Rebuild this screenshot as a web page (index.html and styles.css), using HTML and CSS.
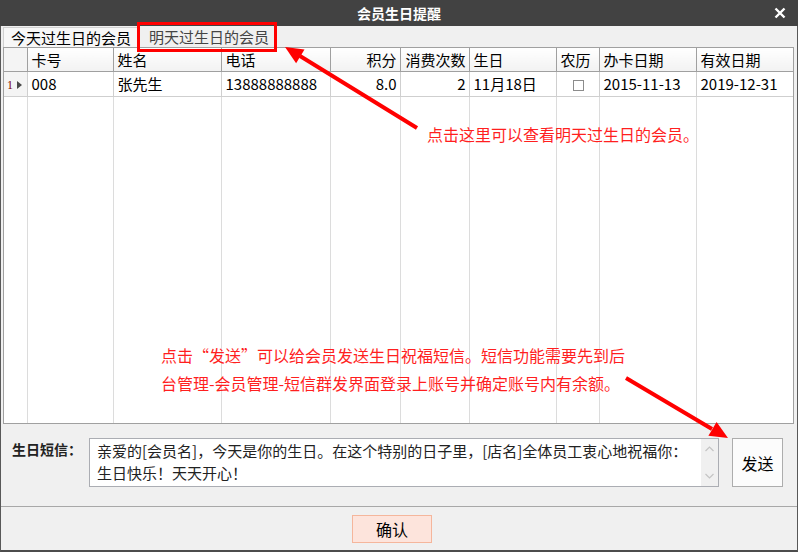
FILE: index.html
```html
<!DOCTYPE html>
<html lang="zh-CN">
<head>
  <meta charset="UTF-8" />
  <title>会员生日提醒</title>
  <link rel="stylesheet" href="styles.css">
</head>
<body>
  <div class="window">
    <div class="titlebar">
      <span></span>
      <span class="title">会员生日提醒</span>
      <svg class="close" width="12" height="12" viewBox="0 0 12 12">
        <path d="M1.5 1.5 L10.5 10.5 M10.5 1.5 L1.5 10.5" stroke="#fff" stroke-width="2.4" />
      </svg>
    </div>

    <div class="main">
      <div class="tabs">
        <div class="tab active">今天过生日的会员</div>
        <div class="tab">明天过生日的会员</div>
      </div>

      <div class="grid">
        <table>
          <colgroup>
            <col style="width:23px"><col style="width:86px"><col style="width:108px">
            <col style="width:109px"><col style="width:70px"><col style="width:69px">
            <col style="width:87px"><col style="width:43px"><col style="width:97px"><col>
          </colgroup>
          <tr class="head">
            <th class="rh"></th>
            <th>卡号</th>
            <th>姓名</th>
            <th>电话</th>
            <th class="num">积分</th>
            <th class="num">消费次数</th>
            <th>生日</th>
            <th>农历</th>
            <th>办卡日期</th>
            <th>有效日期</th>
          </tr>
          <tr class="row">
            <td class="rh"><span class="rownum">1</span><span class="cursor"></span></td>
            <td>008</td>
            <td>张先生</td>
            <td>13888888888</td>
            <td class="num">8.0</td>
            <td class="num">2</td>
            <td>11月18日</td>
            <td class="center"><span class="check"></span></td>
            <td>2015-11-13</td>
            <td>2019-12-31</td>
          </tr>
          <tr class="filler">
            <td></td><td></td><td></td><td></td><td></td>
            <td></td><td></td><td></td><td></td><td></td>
          </tr>
        </table>
      </div>

      <div class="sms">
        <div class="sms-label">生日短信：</div>
        <div class="sms-box">
          <div class="sms-text">
            <div>亲爱的[会员名]，今天是你的生日。在这个特别的日子里，[店名]全体员工衷心地祝福你：</div>
            <div>生日快乐！天天开心！</div>
          </div>
          <div class="scroll">
            <svg width="17" height="47" viewBox="0 0 17 47">
              <path d="M4.5 12 L8.5 8 L12.5 12" fill="none" stroke="#c4c4c4" stroke-width="1.2" />
              <path d="M4.5 35 L8.5 39 L12.5 35" fill="none" stroke="#c4c4c4" stroke-width="1.2" />
            </svg>
          </div>
        </div>
        <button class="send">发送</button>
      </div>

      <div class="footer">
        <button class="ok">确认</button>
      </div>
    </div>

    <!-- 标注 -->
    <div class="redbox"></div>
    <div class="note note-tab">点击这里可以查看明天过生日的会员。</div>
    <div class="note note-send">点击“发送”可以给会员发送生日祝福短信。短信功能需要先到后<br>台管理-会员管理-短信群发界面登录上账号并确定账号内有余额。</div>
    <svg class="arrows" width="798" height="552" viewBox="0 0 798 552">
      <line x1="417" y1="128" x2="300" y2="56" stroke="#ff0000" stroke-width="4" />
      <polygon points="285,47 304.5,49.6 296.1,63.2" fill="#ff0000" />
      <line x1="626" y1="378" x2="712" y2="429" stroke="#ff0000" stroke-width="4" />
      <polygon points="728,438 708.4,435.8 716.6,422" fill="#ff0000" />
    </svg>
  </div>
</body>
</html>
```

FILE: styles.css
```css
html, body {
  margin: 0;
}
body {
  width: 798px;
  height: 552px;
  overflow: hidden;
  background: #f0f0f0;
  font-family: "Noto Sans CJK SC", sans-serif;
  color: #000;
}
.window {
  position: relative;
  height: 552px;
  display: flex;
  flex-direction: column;
}
.titlebar {
  height: 26px;
  flex: none;
  background: #424242;
  display: grid;
  grid-template-columns: 1fr auto 1fr;
  align-items: center;
}
.title {
  color: #fff;
  font-size: 14px;
  font-weight: bold;
  line-height: 26px;
}
.close {
  justify-self: end;
  margin-right: 12px;
}
.main {
  flex: 1;
  display: flex;
  flex-direction: column;
  border-left: 1px solid #585858;
  border-right: 1px solid #585858;
  border-bottom: 2px solid #4c4c4c;
}
.tabs {
  height: 21px;
  flex: none;
  display: flex;
  padding-left: 2px;
}
.tab {
  font-size: 15px;
  line-height: 20px;
  padding: 0 7px;
  margin-top: 1px;
  color: #444;
}
.tab.active {
  color: #000;
  background: #f7f7f7;
  border: 1px solid #d0d0d0;
  border-bottom: none;
}
.tab + .tab {
  margin-left: 3px;
}
.grid {
  height: 377px;
  flex: none;
  margin: 0 3px 0 2px;
  border: 1px solid #a0a0a0;
  box-sizing: border-box;
  background: #fff;
}
.grid table {
  width: 100%;
  height: 100%;
  table-layout: fixed;
  border-collapse: collapse;
  border-style: hidden;
  font-size: 15px;
}
.grid th, .grid td {
  padding: 0 3px 0 4px;
  text-align: left;
  font-weight: normal;
  white-space: nowrap;
  overflow: hidden;
  line-height: 22px;
}
.head th {
  height: 23px;
  background: linear-gradient(#ffffff, #f2f2f2);
  border: 1px solid #a0a0a0;
}
.head .rh {
  background: #f4f4f4;
}
.row td {
  height: 23px;
  border: 1px solid #cfcfcf;
}
.filler td {
  border-left: 1px solid #dcdcdc;
  border-right: 1px solid #dcdcdc;
}
.grid .num {
  text-align: right;
}
.grid .center {
  text-align: center;
}
.row .rh {
  background: #f4f4f4;
  padding: 0 0 0 3px;
}
.rownum {
  font-family: "Liberation Serif", serif;
  font-size: 12px;
  color: #800000;
  vertical-align: middle;
}
.cursor {
  display: inline-block;
  margin-left: 4px;
  border-left: 5px solid #4a4a4a;
  border-top: 4px solid transparent;
  border-bottom: 4px solid transparent;
  vertical-align: middle;
}
.check {
  display: inline-block;
  width: 9px;
  height: 9px;
  border: 1px solid #8c8c8c;
  vertical-align: middle;
}
.sms {
  height: 82px;
  flex: none;
  display: flex;
  align-items: flex-start;
  padding: 14px 0 0 11px;
  box-sizing: border-box;
}
.sms-label {
  width: 77px;
  font-size: 14px;
  font-weight: bold;
  line-height: 20px;
  margin-top: 1px;
  color: #222;
}
.sms-box {
  width: 630px;
  height: 49px;
  box-sizing: border-box;
  border: 1px solid #abadb3;
  background: #fff;
  display: flex;
}
.sms-text {
  flex: 1;
  padding: 1px 0 0 7px;
  font-size: 15px;
  line-height: 22px;
  color: #222;
  white-space: nowrap;
}
.scroll {
  width: 17px;
  background: #f0f0f0;
}
.send {
  margin-left: 13px;
  width: 51px;
  height: 49px;
  border: 1px solid #adadad;
  background: #fcfcfc;
  font-family: inherit;
  font-size: 16px;
  padding: 0;
}
.footer {
  flex: 1;
  border-top: 1px solid #a8a8a8;
  padding: 8px 0 0 351px;
}
.ok {
  width: 80px;
  height: 28px;
  border: 1px solid #f5b69c;
  background: #fde4dc;
  font-family: inherit;
  font-size: 16px;
  padding: 0;
}
.redbox {
  position: absolute;
  left: 137px;
  top: 22px;
  width: 140px;
  height: 30px;
  box-sizing: border-box;
  border: 3px solid #ff0000;
}
.note {
  position: absolute;
  color: #ff1f1f;
  font-size: 16px;
  white-space: nowrap;
}
.note-tab {
  left: 427px;
  top: 125px;
  line-height: 18px;
}
.note-send {
  left: 161px;
  top: 341px;
  line-height: 28px;
}
.arrows {
  position: absolute;
  left: 0;
  top: 0;
  pointer-events: none;
}
```
